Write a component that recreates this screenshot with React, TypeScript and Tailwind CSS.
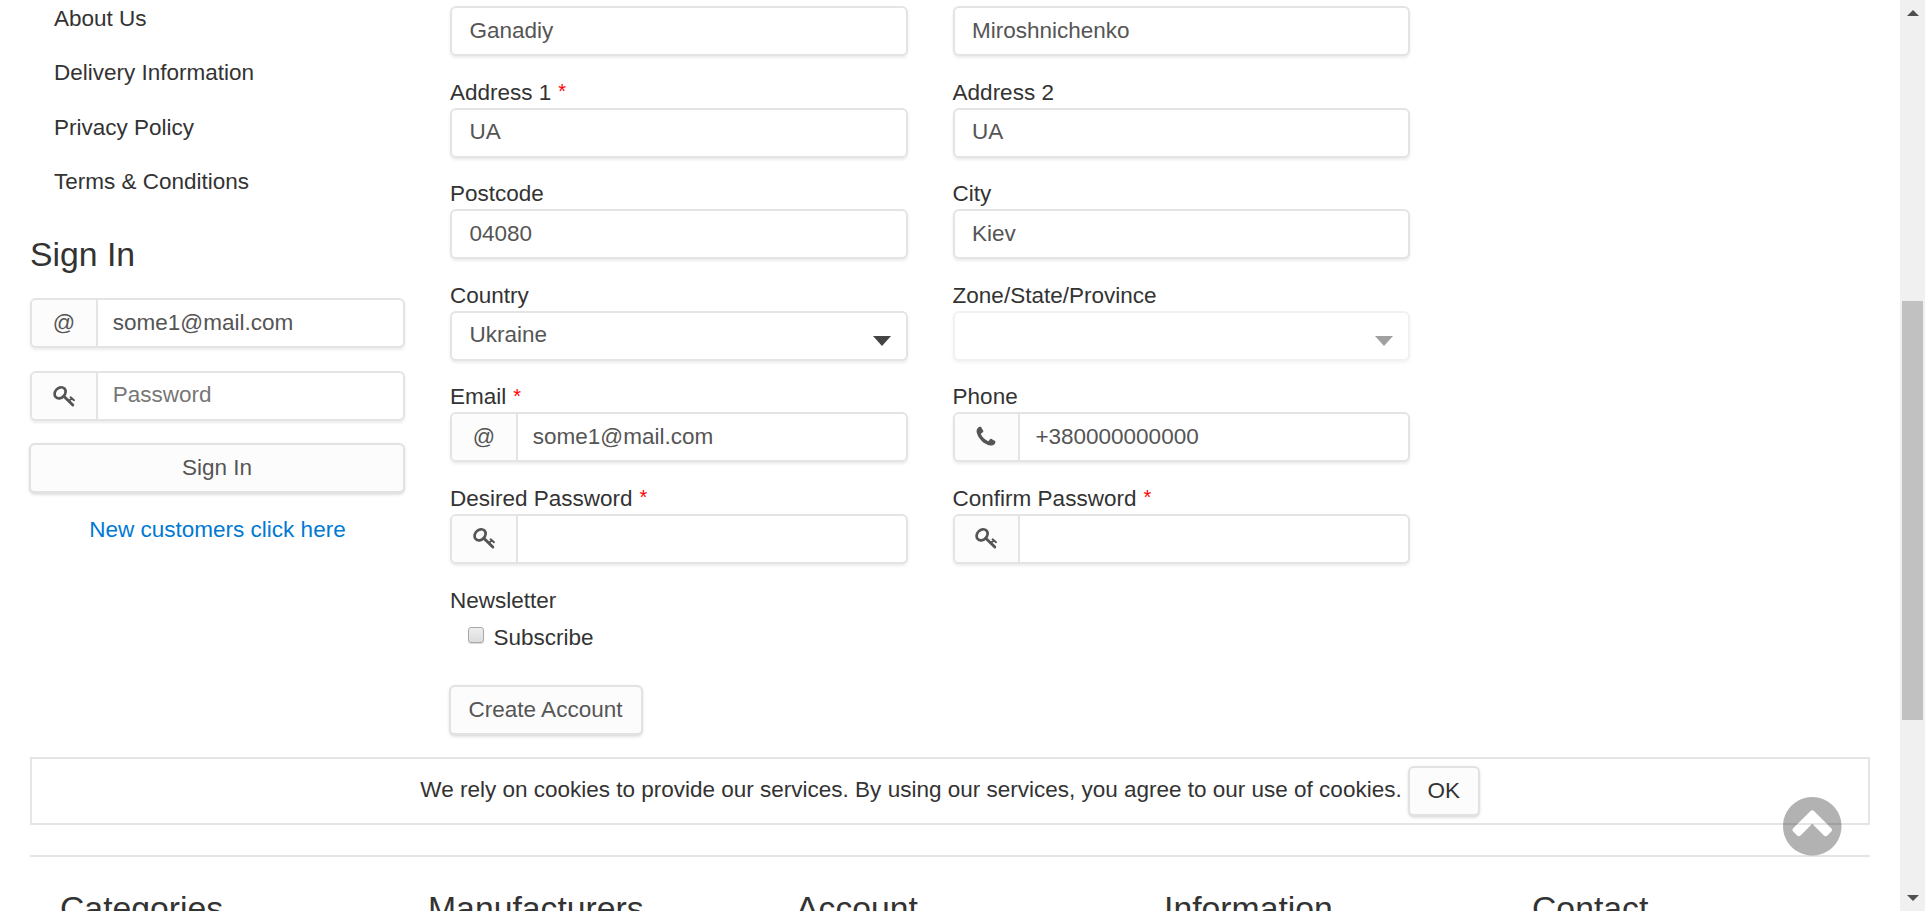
import type { ReactNode } from "react";

const PHONE =
  "M1600 1240q0 27-10 70.5t-21 68.5q-21 50-122 106-94 51-186 51-27 0-53-3.5t-57.5-12.5-47-14.5-55.5-20.5-49-18q-98-35-175-83-127-79-264-216t-216-264q-48-77-83-175-3-9-18-49t-20.5-55.5-14.5-47-12.5-57.5-3.5-53q0-92 51-186 56-101 106-122 25-11 68.5-21t70.5-10q14 0 21 3 18 6 53 76 11 19 30 54t35 63.5 31 53.5q3 4 17.5 25t21.5 35.5 7 28.5q0 20-28.5 50t-62 55-62 53-28.5 46q0 9 5 22.5t8.5 20.5 14 24 11.5 19q76 137 174 235t235 174q2 1 19 11.5t24 14 20.5 8.500 22.500 5q18 0 46-28.500t53-62 55-62 50-28.500q14 0 28.500 7t35.500 21.500 25 17.500q25 15 53.500 31t63.500 35 54 30q70 35 76 53 3 7 3 21z";
const CHEVRON_CIRCLE =
  "M1293 1139l102-102q19-19 19-45t-19-45l-454-454q-19-19-45-19t-45 19l-454 454q-19 19-19 45t19 45l102 102q19 19 45 19t45-19l307-307 307 307q19 19 45 19t45-19zm371-243q0 209-103 385.5t-279.5 279.5-385.5 103-385.5-103-279.5-279.5-103-385.5 103-385.5 279.5-279.5 385.5-103 385.5 103 279.5 279.5 103 385.5z";

const phoneIcon = (
  <svg className="size-6" viewBox="0 0 1792 1792" fill="currentColor">
    <path d={PHONE} />
  </svg>
);

const keyIcon = (
  <svg className="size-6" viewBox="0 0 24 24" fill="none" stroke="currentColor" strokeLinecap="round">
    <ellipse cx="8.1" cy="8.8" rx="6.1" ry="4.9" transform="rotate(-45 8.1 8.8)" strokeWidth="2.7" />
    <path d="M11.8 12.2L20.8 21" strokeWidth="2.9" />
    <path d="M17 16.8L19.6 14.6M18.6 13.3L22 16.2" strokeWidth="2" />
  </svg>
);

const at = <span className="text-[22px] leading-none">@</span>;

type BoxProps = {
  value?: string;
  placeholder?: boolean;
  addon?: ReactNode;
  select?: boolean;
  disabled?: boolean;
};

function Box({ value, placeholder, addon, select, disabled }: BoxProps) {
  return (
    <div
      className={`flex h-[50px] w-full shrink-0 overflow-hidden rounded-[6px] border-2 border-[#e4e4e4] bg-white shadow-[0_2px_3px_rgba(0,0,0,0.08)] ${disabled ? "opacity-50" : ""}`}
    >
      {addon && (
        <div className="flex w-[65.6px] shrink-0 items-center justify-center border-r-2 border-[#e4e4e4] bg-[#fcfcfc] pb-px text-[#555]">
          {addon}
        </div>
      )}
      <div
        className={`flex flex-1 items-center ${addon ? "pl-[15.2px]" : "pl-[17.4px]"} ${placeholder ? "pb-[2px] text-[#777]" : "pb-px text-[#555]"}`}
      >
        {value}
      </div>
      {select && (
        <svg className="mt-[23px] mr-[15px] h-[10px] w-[18px] shrink-0" viewBox="0 0 18 10" fill="#444">
          <path d="M0 0h18L9 10z" />
        </svg>
      )}
    </div>
  );
}

type FieldProps = BoxProps & { label?: string; required?: boolean };

function Field({ label, required, ...box }: FieldProps) {
  return (
    <div className="flex h-[101.6px] flex-col justify-end">
      <div className="h-8 leading-[34px]">
        {label}
        {required && <span className="ml-[7px] align-[1.5px] text-[20px] leading-none text-[#f00]">*</span>}
      </div>
      <Box {...box} />
    </div>
  );
}

const FIELDS: FieldProps[] = [
  { value: "Ganadiy" },
  { value: "Miroshnichenko" },
  { label: "Address 1", required: true, value: "UA" },
  { label: "Address 2", value: "UA" },
  { label: "Postcode", value: "04080" },
  { label: "City", value: "Kiev" },
  { label: "Country", value: "Ukraine", select: true },
  { label: "Zone/State/Province", select: true, disabled: true },
  { label: "Email", required: true, value: "some1@mail.com", addon: at },
  { label: "Phone", value: "+380000000000", addon: phoneIcon },
  { label: "Desired Password", required: true, addon: keyIcon },
  { label: "Confirm Password", required: true, addon: keyIcon },
];

const LINKS = ["About Us", "Delivery Information", "Privacy Policy", "Terms & Conditions"];
const FOOTER = ["Categories", "Manufacturers", "Account", "Information", "Contact"];
const BUTTON =
  "flex h-[51px] items-center justify-center rounded-[6px] border-2 border-b-3 border-[#e2e2e2] bg-[#fcfcfc] shadow-[0_1px_3px_rgba(0,0,0,0.12)]";

export default function App() {
  return (
    <div className="relative flex h-[911px] w-full overflow-hidden bg-white font-['Liberation_Sans',Arial,sans-serif] text-[22.5px] text-[#333]">
      <main className="flex min-w-0 flex-1 flex-col px-[30px]">
        <div className="flex h-[757px] shrink-0">
          <aside className="w-[375px] shrink-0">
            <nav className="-mt-[8.5px] flex flex-col pl-6">
              {LINKS.map((l) => (
                <a key={l} className="h-[54.6px] leading-[54.6px]">
                  {l}
                </a>
              ))}
            </nav>
            <h3 className="mt-[24.2px] h-[40px] text-[33.75px] leading-[40px]">Sign In</h3>
            <div className="mt-[24px]">
              <Box value="some1@mail.com" addon={at} />
            </div>
            <div className="mt-[23px]">
              <Box value="Password" placeholder addon={keyIcon} />
            </div>
            <div className={`mt-[22px] -ml-px text-[#555] ${BUTTON}`}>Sign In</div>
            <a className="mt-5 block text-center leading-8 text-[#0079d3]">New customers click here</a>
          </aside>
          <section className="ml-[45px] w-[960px]">
            <div className="-mt-[45.6px] grid grid-cols-[458px_457.4px] gap-x-[44.6px]">
              {FIELDS.map((f, i) => (
                <Field key={i} {...f} />
              ))}
            </div>
            <div className="mt-5 h-8 leading-[33px]">Newsletter</div>
            <label className="mt-[6px] flex h-8 items-center pl-[18px] leading-8">
              <span className="mr-[9.500px] -mt-[5px] size-[16px] rounded-[3px] border border-[#a8a8a8] bg-linear-to-b from-[#eee] to-[#dcdcdc] shadow-[0_1px_1px_rgba(0,0,0,0.15)]" />
              Subscribe
            </label>
            <div className={`mt-[31px] -ml-px w-[194px] pr-px pb-px text-[#555] ${BUTTON}`}>Create Account</div>
          </section>
        </div>
        <div className="flex h-[68px] shrink-0 items-center justify-center border-2 border-[#e5e5e5]">
          <span className="mr-[6px] -mt-[2px]">
            We rely on cookies to provide our services. By using our services, you agree to our use of cookies.
          </span>
          <div className={`w-[72px] ${BUTTON}`}>OK</div>
        </div>
        <footer className="mt-[30px] grid shrink-0 grid-cols-5 border-t-2 border-[#e5e5e5] pt-[31px]">
          {FOOTER.map((f) => (
            <h3 key={f} className="pl-[30px] text-[33.75px] leading-[40px]">
              {f}
            </h3>
          ))}
        </footer>
      </main>
      <div className="flex w-[25px] shrink-0 flex-col items-center bg-[#f0f0f0]">
        <svg className="mt-[10px] h-[6px] w-[12px]" viewBox="0 0 12 6" fill="#505050">
          <path d="M0 6h12L6 0z" />
        </svg>
        <div className="mt-[285px] -ml-px h-[419px] w-[21px] bg-[#c1c1c1]" />
        <svg className="mt-[175px] h-[6px] w-[12px]" viewBox="0 0 12 6" fill="#505050">
          <path d="M0 0h12L6 6z" />
        </svg>
      </div>
      <svg
        className="absolute top-[797px] left-[1783px] size-[58.5px]"
        viewBox="128 128 1536 1536"
        fill="#000"
        fillOpacity="0.3"
      >
        <path d={CHEVRON_CIRCLE} />
      </svg>
    </div>
  );
}
